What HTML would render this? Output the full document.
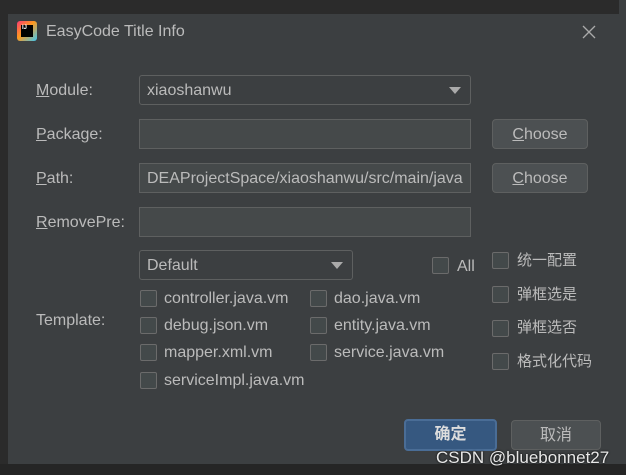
<!DOCTYPE html>
<html><head><meta charset="utf-8"><style>
*{box-sizing:border-box;margin:0;padding:0}
body{width:626px;height:475px;background:#2b2b2b;position:relative;overflow:hidden;font-family:"Liberation Sans","Noto Sans CJK SC",sans-serif;font-size:16px;color:#bbbbbb}
.a{position:absolute}
#dlg{left:8px;top:14px;width:611px;height:450px;background:#3c3f41}
.lbl{position:absolute;font-size:16px;color:#bbbbbb}
.lbl u{text-decoration:underline}
.field{position:absolute;background:#45494a;border:1px solid #5e6060;height:30px;padding:6px 7px;color:#bbbbbb;font-size:16px;white-space:nowrap;overflow:hidden}
.combo{position:absolute;background:#3c3f41;border:1px solid #5e6060;border-radius:3px;height:30px;padding:6px 7px;font-size:16px}
.combo:after{content:"";position:absolute;right:9px;top:11px;border-left:6px solid transparent;border-right:6px solid transparent;border-top:7px solid #aaaaaa}
.btn{position:absolute;background:#4c5052;border:1px solid #5e6060;border-radius:4px;height:30px;text-align:center;line-height:30px;font-size:16px}
.cb{position:absolute;width:17px;height:17px;border:1px solid #6b6b6b;border-radius:2px;background:#43494a}
.ct{position:absolute;font-size:16px}
.cj{position:absolute;font-size:15px;line-height:18px}
</style></head><body>
<div class="a" style="left:0;top:0;width:626px;height:14px;background:#2b2b2b"></div>
<div class="a" style="left:619px;top:0;width:7px;height:475px;background:#3c3f41"></div>
<div class="a" style="left:0;top:464px;width:626px;height:11px;background:#252525"></div>
<div id="dlg" class="a"></div>
<div class="a" style="left:17px;top:21px;width:20px;height:20px;background:linear-gradient(135deg,#fc3a72,#fd9a1e 45%,#3bc7f5);border-radius:3px"></div>
<div class="a" style="left:21px;top:25px;width:12px;height:12px;background:#000;color:#fff;font-size:6px;font-weight:bold;line-height:7px;padding-left:1px">IJ</div>
<div class="lbl" style="left:46px;top:23px;font-size:16px">EasyCode Title Info</div>
<svg class="a" style="left:582px;top:25px" width="14" height="14"><path d="M1 1L13 13M13 1L1 13" stroke="#aaaaaa" stroke-width="1.3"/></svg>

<div class="lbl" style="left:36px;top:82px"><u>M</u>odule:</div>
<div class="combo" style="left:139px;top:75px;width:332px">xiaoshanwu</div>
<div class="lbl" style="left:36px;top:126px"><u>P</u>ackage:</div>
<div class="field" style="left:139px;top:119px;width:332px"></div>
<div class="btn" style="left:492px;top:119px;width:96px"><u>C</u>hoose</div>
<div class="lbl" style="left:36px;top:170px"><u>P</u>ath:</div>
<div class="field" style="left:139px;top:163px;width:332px">DEAProjectSpace/xiaoshanwu/src/main/java</div>
<div class="btn" style="left:492px;top:163px;width:96px"><u>C</u>hoose</div>
<div class="lbl" style="left:36px;top:214px"><u>R</u>emovePre:</div>
<div class="field" style="left:139px;top:207px;width:332px"></div>

<div class="combo" style="left:139px;top:250px;width:214px">Default</div>
<div class="lbl" style="left:36px;top:312px">Template:</div>

<div class="cb" style="left:140px;top:290px"></div><div class="ct" style="left:164px;top:290px">controller.java.vm</div>
<div class="cb" style="left:310px;top:290px"></div><div class="ct" style="left:334px;top:290px">dao.java.vm</div>
<div class="cb" style="left:140px;top:317px"></div><div class="ct" style="left:164px;top:317px">debug.json.vm</div>
<div class="cb" style="left:310px;top:317px"></div><div class="ct" style="left:334px;top:317px">entity.java.vm</div>
<div class="cb" style="left:140px;top:344px"></div><div class="ct" style="left:164px;top:344px">mapper.xml.vm</div>
<div class="cb" style="left:310px;top:344px"></div><div class="ct" style="left:334px;top:344px">service.java.vm</div>
<div class="cb" style="left:140px;top:372px"></div><div class="ct" style="left:164px;top:372px">serviceImpl.java.vm</div>

<div class="cb" style="left:432px;top:257px"></div><div class="ct" style="left:457px;top:258px">All</div>
<div class="cb" style="left:492px;top:252px"></div><div class="cj" style="left:517px;top:252px">统一配置</div>
<div class="cb" style="left:492px;top:286px"></div><div class="cj" style="left:517px;top:286px">弹框选是</div>
<div class="cb" style="left:492px;top:320px"></div><div class="cj" style="left:517px;top:319px">弹框选否</div>
<div class="cb" style="left:492px;top:353px"></div><div class="cj" style="left:517px;top:353px">格式化代码</div>

<div class="btn" style="left:404px;top:419px;width:93px;height:32px;background:#365880;border:2px solid #4a6d96;color:#ddd;line-height:28px;font-weight:bold">确定</div>
<div class="btn" style="left:511px;top:420px;width:90px;background:#4c5052">取消</div>
<div class="a" style="left:436px;top:448px;color:#e8e8e8;font-size:17px;text-shadow:0 0 2px #000">CSDN @bluebonnet27</div>
</body></html>
